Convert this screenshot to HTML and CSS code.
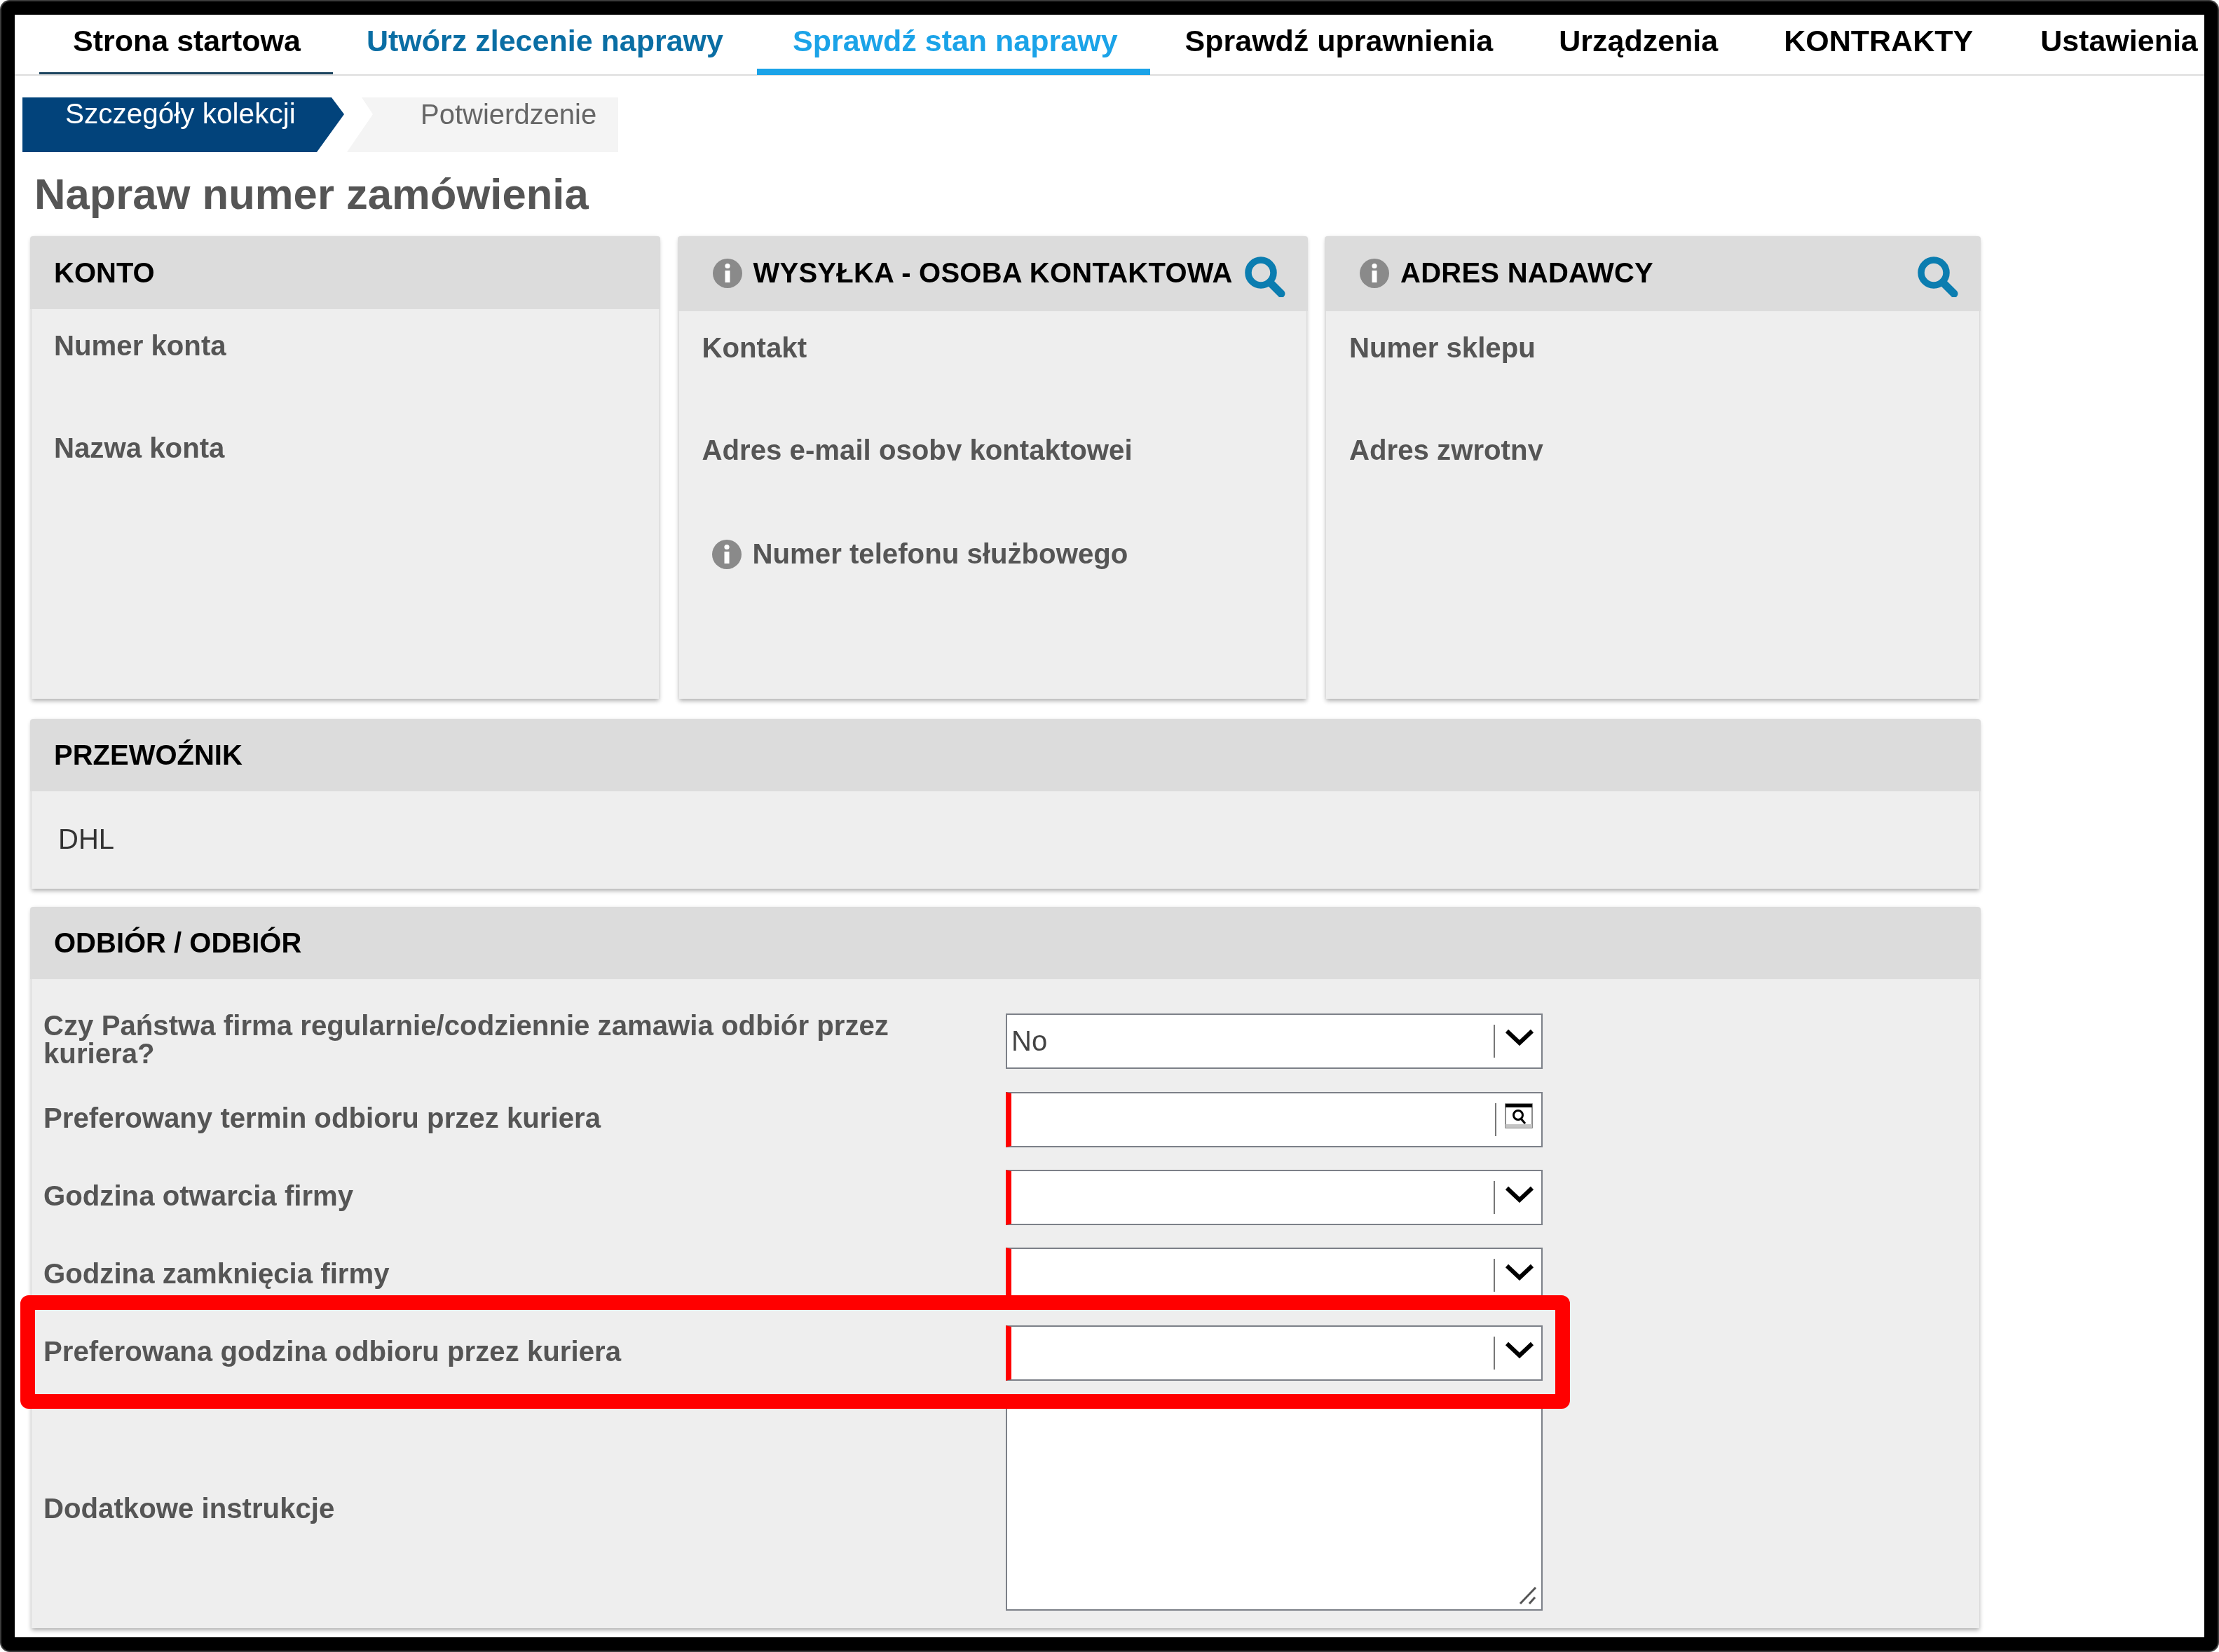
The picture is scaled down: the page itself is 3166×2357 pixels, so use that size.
FILE: index.html
```html
<!DOCTYPE html>
<html lang="pl">
<head>
<meta charset="utf-8">
<title>Napraw numer zamówienia</title>
<link rel="stylesheet" href="styles.css">
</head>
<body>
<svg class="defs" width="0" height="0" aria-hidden="true">
  <symbol id="info" viewBox="0 0 42 42">
    <circle cx="21" cy="21" r="21" fill="#8a8a8a"/>
    <circle cx="21" cy="10.5" r="3.6" fill="#fff"/>
    <rect x="17.5" y="17" width="7" height="17" fill="#fff"/>
  </symbol>
  <symbol id="search" viewBox="0 0 58 58">
    <circle cx="23" cy="23" r="18" fill="none" stroke="#0b7db0" stroke-width="9.5"/>
    <path d="M36 37 L52 53" fill="none" stroke="#0b7db0" stroke-width="11" stroke-linecap="round"/>
  </symbol>
  <symbol id="chevron" viewBox="0 0 42 24">
    <path d="M3 3 L21 20 L39 3" fill="none" stroke="#000" stroke-width="6"/>
  </symbol>
  <symbol id="calendar" viewBox="0 0 40 36">
    <rect x="1" y="1" width="38" height="34" fill="#fff" stroke="#666" stroke-width="1.5"/>
    <rect x="1" y="1" width="38" height="5" fill="#000"/>
    <rect x="1" y="30" width="38" height="5" fill="#c4c4c4"/>
    <circle cx="19" cy="17" r="6.5" fill="none" stroke="#000" stroke-width="3"/>
    <path d="M23 22 L29 29" stroke="#000" stroke-width="3"/>
  </symbol>
</svg>
<div class="frame">
  <div class="screen">
    <nav class="tabs">
      <a class="tab tab-home">Strona startowa</a>
      <a class="tab tab-link">Utwórz zlecenie naprawy</a>
      <a class="tab tab-active">Sprawdź stan naprawy</a>
      <a class="tab tab-tight">Sprawdź uprawnienia</a>
      <a class="tab tab-tight">Urządzenia</a>
      <a class="tab">KONTRAKTY</a>
      <a class="tab">Ustawienia</a>
    </nav>

    <div class="crumbs">
      <div class="crumb crumb-current">Szczegóły kolekcji</div>
      <div class="crumb crumb-next">Potwierdzenie</div>
    </div>

    <h1 class="title">Napraw numer zamówienia</h1>

    <main class="content">
      <div class="triple">
        <section class="card">
          <header class="card-head card-head-short"><span>KONTO</span></header>
          <div class="card-body card-body-short">
            <div class="field">Numer konta</div>
            <div class="field field-clip">Nazwa konta</div>
          </div>
        </section>
        <section class="card">
          <header class="card-head card-head-icon">
            <svg class="info"><use href="#info"/></svg>
            <span>WYSYŁKA - OSOBA KONTAKTOWA</span>
            <svg class="search"><use href="#search"/></svg>
          </header>
          <div class="card-body">
            <div class="field">Kontakt</div>
            <div class="field field-clip">Adres e-mail osoby kontaktowei</div>
            <div class="field field-info">
              <svg class="info"><use href="#info"/></svg>
              <span>Numer telefonu służbowego</span>
            </div>
          </div>
        </section>
        <section class="card">
          <header class="card-head card-head-icon">
            <svg class="info"><use href="#info"/></svg>
            <span>ADRES NADAWCY</span>
            <svg class="search"><use href="#search"/></svg>
          </header>
          <div class="card-body">
            <div class="field">Numer sklepu</div>
            <div class="field field-clip">Adres zwrotny</div>
          </div>
        </section>
      </div>

      <section class="card card-carrier">
        <header class="card-head"><span>PRZEWOŹNIK</span></header>
        <div class="carrier">DHL</div>
      </section>

      <section class="card card-pickup">
        <header class="card-head"><span>ODBIÓR / ODBIÓR</span></header>
        <div class="form">
          <div class="row">
            <label class="row-label row-label-double">Czy Państwa firma regularnie/codziennie zamawia odbiór przez kuriera?</label>
            <div class="control">
              <span class="value">No</span>
              <i class="divider"></i>
              <svg class="chevron"><use href="#chevron"/></svg>
            </div>
          </div>
          <div class="row">
            <label class="row-label">Preferowany termin odbioru przez kuriera</label>
            <div class="control required">
              <span class="value"></span>
              <i class="divider"></i>
              <svg class="calendar"><use href="#calendar"/></svg>
            </div>
          </div>
          <div class="row">
            <label class="row-label">Godzina otwarcia firmy</label>
            <div class="control required">
              <span class="value"></span>
              <i class="divider"></i>
              <svg class="chevron"><use href="#chevron"/></svg>
            </div>
          </div>
          <div class="row">
            <label class="row-label">Godzina zamknięcia firmy</label>
            <div class="control required">
              <span class="value"></span>
              <i class="divider"></i>
              <svg class="chevron"><use href="#chevron"/></svg>
            </div>
          </div>
          <div class="row">
            <label class="row-label">Preferowana godzina odbioru przez kuriera</label>
            <div class="control required">
              <span class="value"></span>
              <i class="divider"></i>
              <svg class="chevron"><use href="#chevron"/></svg>
            </div>
          </div>
          <div class="row">
            <label class="row-label row-label-area">Dodatkowe instrukcje</label>
            <div class="control control-area">
              <svg class="resizer" viewBox="0 0 26 28"><path d="M2 25 L24 2 M15 25 L23 16" fill="none" stroke="#555" stroke-width="3"/></svg>
            </div>
          </div>
        </div>
      </section>
    </main>

    <div class="highlight" aria-hidden="true"></div>
  </div>
</div>
</body>
</html>
```
FILE: styles.css
```css
* { box-sizing: border-box; }
html, body { margin: 0; padding: 0; background: #fff; }
body { font-family: "Liberation Sans", Arial, sans-serif; width: 3166px; height: 2357px; overflow: hidden; }
.defs { position: absolute; }

.frame { width: 3166px; height: 2357px; padding: 2px; background: #3c3c3c; border-radius: 14px; filter: blur(0.7px); }
.screen { position: relative; width: 100%; height: 100%; border: 19px solid #000; border-radius: 12px; background: #fff; overflow: hidden; }

/* top tabs */
.tabs { display: flex; align-items: flex-start; height: 87px; padding-left: 35px; border-bottom: 2px solid #ddd; white-space: nowrap; }
.tab { display: block; height: 85px; padding: 0 48px; font-size: 43px; font-weight: 700; line-height: 74px; color: #000; }
.tab-home { padding-right: 46px; border-bottom: 3px solid #1d4560; }
.tab-link { color: #0a6ea4; }
.tab-active { height: 86px; padding: 0 46px 0 51px; margin-right: 2px; color: #1ba3e8; border-bottom: 9px solid #1ba3e8; }
.tab-tight { padding-right: 46px; }

/* breadcrumb steps */
.crumbs { display: flex; height: 78px; margin: 31px 0 0 11px; }
.crumb { height: 78px; white-space: nowrap; }
.crumb-current { width: 459px; padding-left: 61px; font-size: 40.5px; line-height: 47px; color: #fff; background: #02437b; clip-path: polygon(0 0, 441px 0, 459px 24px, 420px 78px, 0 78px); }
.crumb-next { width: 387px; margin-left: 4px; padding-left: 105px; font-size: 40px; line-height: 48px; color: #666; background: #f4f4f4; clip-path: polygon(21px 0, 100% 0, 100% 100%, 0 100%, 37px 24px); }

.title { margin: 0 0 0 28px; font-size: 61.6px; font-weight: 700; line-height: 120px; color: #555; }

/* panels */
.content { width: 2779px; margin-left: 24px; }
.triple { display: grid; grid-template-columns: 895px 895px 932px; column-gap: 28.5px; margin-bottom: 29px; }
.card { background: #eee; box-shadow: 0 3px 6px rgba(0, 0, 0, 0.32); border-radius: 4px 4px 0 0; }
.triple .card { height: 660px; }
.card-carrier { height: 242px; margin-bottom: 26px; }
.card-pickup { height: 1029px; }
.card-head { display: flex; align-items: center; height: 103px; margin: 0 -2px; padding: 0 34px; background: #dcdcdc; border-radius: 4px 4px 0 0; font-size: 40px; font-weight: 700; color: #000; white-space: nowrap; }
.card-head-short { height: 104px; }
.card-head-icon { height: 107px; padding: 0 32px 2px 50px; letter-spacing: 0.25px; }
.card-head-icon .info { margin-right: 16px; }
.card-head-icon .search { margin-left: auto; margin-top: 10px; flex: none; }
.info { width: 42px; height: 42px; flex: none; }
.search { width: 58px; height: 58px; }

.card-body { padding: 33px 32px 0 33px; }
.card-body-short { padding-top: 33px; padding-left: 32px; }
.field { height: 146px; font-size: 40.2px; font-weight: 700; line-height: 40px; color: #555; white-space: nowrap; }
.field-clip { height: 148px; clip-path: inset(0 0 114px 0); }
.card-body-short .field-clip { clip-path: none; }
.field-info { display: flex; align-items: center; height: 40px; margin-left: 14px; gap: 16px; }

.carrier { padding: 48px 38px 0; font-size: 40px; line-height: 40px; color: #333; }

/* pickup form */
.form { display: flex; flex-direction: column; gap: 32px; padding: 47px 17px 0; }
.row { display: flex; align-items: center; }
.row-label { flex: none; width: 1373px; padding-right: 72px; margin-bottom: 4px; font-size: 40.2px; font-weight: 700; line-height: 40px; color: #555; }
.row-label-double { margin-bottom: 2px; }
.row-label-area { margin: 6px 0 0; }
.control { position: relative; display: flex; align-items: center; width: 766px; height: 79px; padding-right: 10px; background: #fff; border: 2.5px solid #7c8088; }
.required { border-left: 8px solid #f00; }
.value { flex: 1; padding-left: 6px; font-size: 40px; color: #444; }
.divider { display: block; width: 2px; height: 47px; margin-right: 14px; background: #777; }
.chevron { width: 42px; height: 24px; margin-bottom: 10px; }
.calendar { width: 40px; height: 36px; margin-bottom: 12px; margin-right: 2px; margin-left: -2px; }
.control-area { height: 296px; }
.resizer { position: absolute; right: 6px; bottom: 5px; width: 26px; height: 28px; }

/* annotation drawn over the form */
.highlight { position: absolute; left: 8px; top: 1827px; width: 2211px; height: 162px; border: 21px solid #f00; border-radius: 12px; pointer-events: none; }
```
